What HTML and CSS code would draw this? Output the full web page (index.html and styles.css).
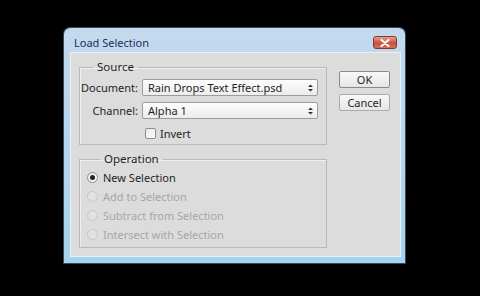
FILE: index.html
```html
<!DOCTYPE html>
<html lang="en">
<head>
    <meta charset="UTF-8">
    <title>Load Selection</title>
    <link rel="stylesheet" href="styles.css">
</head>
<body>
    <div class="window">
        <div class="titlebar">
            <span class="title">Load Selection</span>
            <span class="close">
                <svg width="10" height="8" viewBox="0 0 10 8"><path d="M1.5 1 L8.5 7 M8.5 1 L1.5 7" stroke="#fff" stroke-width="2" stroke-linecap="round"/></svg>
            </span>
        </div>
        <div class="client">
            <div class="groups">
                <fieldset class="group source">
                    <legend>Source</legend>
                    <div class="field">
                        <span class="field-label">Document:</span>
                        <div class="dropdown">
                            <span>Rain Drops Text Effect.psd</span>
                            <svg width="7" height="10" viewBox="0 0 7 10"><path d="M1 4 L3.5 1.5 L6 4 Z M1 6 L3.5 8.5 L6 6 Z" fill="#333"/></svg>
                        </div>
                    </div>
                    <div class="field">
                        <span class="field-label">Channel:</span>
                        <div class="dropdown">
                            <span>Alpha 1</span>
                            <svg width="7" height="10" viewBox="0 0 7 10"><path d="M1 4 L3.5 1.5 L6 4 Z M1 6 L3.5 8.5 L6 6 Z" fill="#333"/></svg>
                        </div>
                    </div>
                    <div class="check"><span class="box"></span>Invert</div>
                </fieldset>
                <fieldset class="group operation">
                    <legend>Operation</legend>
                    <div class="radio checked"><span class="dot"></span>New Selection</div>
                    <div class="radio disabled"><span class="dot"></span>Add to Selection</div>
                    <div class="radio disabled"><span class="dot"></span>Subtract from Selection</div>
                    <div class="radio disabled"><span class="dot"></span>Intersect with Selection</div>
                </fieldset>
            </div>
            <div class="actions">
                <button type="button" class="btn default">OK</button>
                <button type="button" class="btn">Cancel</button>
            </div>
        </div>
    </div>
</body>
</html>
```

FILE: styles.css
```css
body {
    margin: 0;
    padding: 28px 0 0 64px;
    height: 296px;
    box-sizing: border-box;
    background: #000;
    font-family: "Noto Sans", "DejaVu Sans", sans-serif;
    font-size: 11px;
    color: #1f1f1f;
}

.window {
    width: 341px;
    height: 235px;
    box-sizing: border-box;
    padding: 0 5px 7px 7px;
    display: flex;
    flex-direction: column;
    background: linear-gradient(to bottom, #c4d9ee, #a6d3ee);
    border-radius: 6px 6px 0 0;
    box-shadow: 0 0 0 1px #34495c;
}

.titlebar {
    height: 25px;
    box-sizing: border-box;
    padding: 4px 3px 0 3px;
    display: flex;
    align-items: center;
    justify-content: space-between;
}

.title {
    color: #1e2f5c;
    font-size: 11px;
}

.close {
    width: 24px;
    height: 13px;
    display: flex;
    align-items: center;
    justify-content: center;
    background: linear-gradient(to bottom, #e4a393, #c8503f 55%, #d0705c);
    border: 1px solid #8a3528;
    border-radius: 3px;
    box-sizing: border-box;
}

.client {
    flex: 1;
    display: flex;
    padding: 6px 0 0 8px;
    background: #dcdcdc;
    box-shadow: 0 0 0 1px #e9f1f8;
}

.groups {
    width: 248px;
}

.group {
    margin: 0;
    padding: 0;
    min-inline-size: 0;
    border: 1px solid #b9b9b9;
    box-shadow: inset 1px 1px 0 #efefef;
}

.group legend {
    margin-left: 13px;
    padding: 0 4px;
    line-height: 16px;
    font-size: 11.5px;
}

.source {
    padding: 4px 0 3px 0;
}

.operation {
    margin-top: 6px;
    padding: 1px 0 3px 7px;
}

.field {
    display: flex;
    align-items: center;
    margin-bottom: 6px;
}

.field-label {
    width: 58px;
    margin-right: 4px;
    text-align: right;
}

.dropdown {
    width: 176px;
    height: 17px;
    box-sizing: border-box;
    padding: 0 3px 0 5px;
    display: flex;
    align-items: center;
    justify-content: space-between;
    background: linear-gradient(to bottom, #fdfdfd, #ececec);
    border: 1px solid #9c9c9c;
    border-radius: 2px;
}

.check {
    display: flex;
    align-items: center;
    height: 16px;
    padding-left: 65px;
    margin-top: 3px;
}

.box {
    width: 11px;
    height: 11px;
    box-sizing: border-box;
    margin-right: 4px;
    border: 1px solid #8e8e8e;
    border-radius: 2px;
    background: linear-gradient(to bottom right, #e9e9e9, #fdfdfd);
}

.radio {
    display: flex;
    align-items: center;
    height: 19px;
}

.radio .dot {
    width: 11px;
    height: 11px;
    box-sizing: border-box;
    margin-right: 5px;
    border: 1px solid #8e8e8e;
    border-radius: 50%;
    background: linear-gradient(to bottom right, #e6e6e6, #fcfcfc);
    display: flex;
    align-items: center;
    justify-content: center;
}

.radio.checked .dot::after {
    content: "";
    width: 5px;
    height: 5px;
    border-radius: 50%;
    background: #222;
}

.radio.disabled {
    color: #a6a6a6;
}

.radio.disabled .dot {
    border-color: #c6c6c6;
    background: #e2e2e2;
}

.actions {
    width: 51px;
    margin-left: 12px;
    padding-top: 12px;
    display: flex;
    flex-direction: column;
    gap: 6px;
}

.btn {
    height: 17px;
    padding: 0;
    font-family: inherit;
    font-size: 11px;
    color: #1f1f1f;
    background: linear-gradient(to bottom, #f8f8f8, #e6e6e6);
    border: 1px solid #acacac;
    border-radius: 2px;
}

.btn.default {
    border-color: #8a8a8a;
}
```
